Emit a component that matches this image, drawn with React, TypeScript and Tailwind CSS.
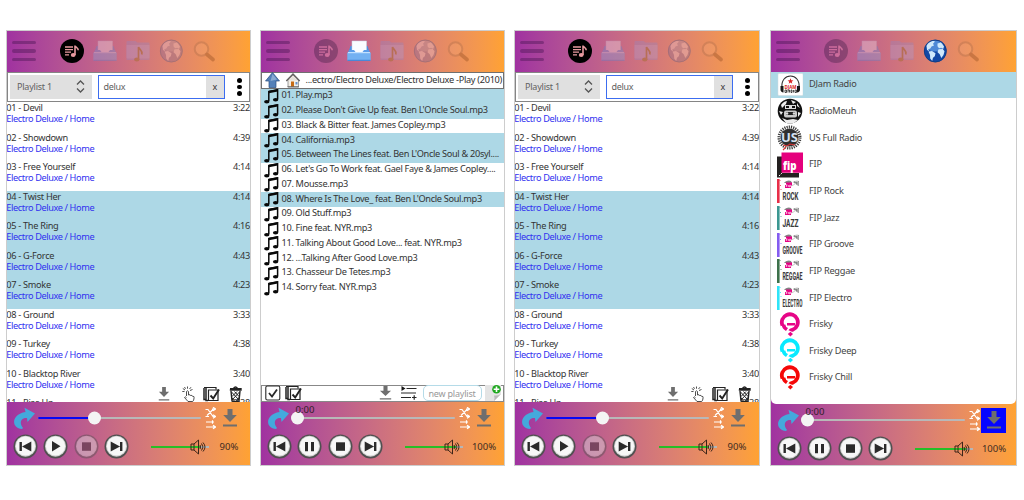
import React from "react";

const TRACKS: [string, string][] = [
  ["01 - Devil", "3:22"],
  ["02 - Showdown", "4:39"],
  ["03 - Free Yourself", "4:14"],
  ["04 - Twist Her", "4:14"],
  ["05 - The Ring", "4:16"],
  ["06 - G-Force", "4:43"],
  ["07 - Smoke", "4:23"],
  ["08 - Ground", "3:33"],
  ["09 - Turkey", "4:38"],
  ["10 - Blacktop River", "3:40"],
  ["11 - Rise Up", "3:38"],
];

const FILES: [string, boolean][] = [
  ["01. Play.mp3", true],
  ["02. Please Don't Give Up feat. Ben L'Oncle Soul.mp3", true],
  ["03. Black & Bitter feat. James Copley.mp3", false],
  ["04. California.mp3", true],
  ["05. Between The Lines feat. Ben L'Oncle Soul & 20syl....", true],
  ["06. Let's Go To Work feat. Gael Faye & James Copley....", false],
  ["07. Mousse.mp3", false],
  ["08. Where Is The Love_ feat. Ben L'Oncle Soul.mp3", true],
  ["09. Old Stuff.mp3", false],
  ["10. Fine feat. NYR.mp3", false],
  ["11. Talking About Good Love... feat. NYR.mp3", false],
  ["12. ...Talking After Good Love.mp3", false],
  ["13. Chasseur De Tetes.mp3", false],
  ["14. Sorry feat. NYR.mp3", false],
];

type Tab = "list" | "tray" | "folder" | "globe" | "search";

function TabIcon({ kind, on }: { kind: Tab; on: boolean }) {
  return (
    <svg className={on ? "h-6 w-6 shrink-0" : kind === "search" ? "h-6 w-6 shrink-0 opacity-30" : "h-6 w-6 shrink-0 opacity-30"} viewBox="0 0 24 24">
      {kind === "list" && (
        <>
          <circle cx="12" cy="12" r="12" fill={on ? "#000" : "#201030"} />
          <g stroke={on ? "#e79aa0" : "#ff9fb8"} strokeWidth="1.3" fill="none">
            <path d="M5 8h8M5 10.6h8M5 13.2h6M5 15.8h4" />
            <path d="M15 16V6.5c.3 2 3.4 1.900 3.200 4.800" strokeWidth="1.600" />
          </g>
          <ellipse cx="13.200" cy="16" rx="2.400" ry="1.900" fill={on ? "#e79aa0" : "#ff9fb8"} />
        </>
      )}
      {kind === "tray" && (
        <>
          <path d="M1 14 3.500 7h17l2.500 7z" fill="#4d8fe0" />
          <path d="M5 2h14.500v12H5z" fill="#fafcff" stroke="#c9d6e6" strokeWidth=".5" />
          <path d="M2 11h5l1.500 2h7l1.500-2h5l1 4H1z" fill="#5a9cea" />
          <rect x=".3" y="13" width="23.400" height="9" rx="1.200" fill="#73b1f2" />
          <path d="M1 13.600h22" stroke="#c1e0ff" strokeWidth="1.200" />
          <path d="M.5 21.300h23" stroke="#3f7fd0" strokeWidth="1" />
        </>
      )}
      {kind === "folder" && (
        <>
          <path d="M.5 21V3q0-1 1-1h8l2 1.500h11q1 0 1 1V21z" fill="#8b8bd0" />
          <path d="M.5 6h23v12.500q0 1-1 1h-21q-1 0-1-1z" fill="#a5a8e8" />
          <path d="M12.500 20.500V8c1 3 4.500 3.500 3.300 7.500" stroke="#806000" strokeWidth="1.700" fill="none" />
          <ellipse cx="10.800" cy="20.500" rx="2.700" ry="2" fill="#8a6a00" />
        </>
      )}
      {kind === "globe" && (
        <>
          <circle cx="12.300" cy="12" r="11.300" fill={on ? "#1248a5" : "#7064a0"} />
          <ellipse cx="12" cy="7" rx="8.500" ry="5.500" fill={on ? "#6eaaf0" : "#a7a0c4"} opacity=".65" />
          <g fill={on ? "#cfe8fb" : "#e6d0e8"}>
            <path d="M3.500 6.500 6 3.500l4-1.800 2 .8-2 2.200 1 1.800-2.500 1-1.200 2-2 .8 1 2-2.300-1.300z" />
            <path d="M5.500 12.500 9 12l3.500 2.300-.7 3-1.800 1.500-.8 3.200-2-2.600-.2-3.300z" />
            <path d="M14.500 4.500 18 3.600l3 4-.8 2.400-2-1.200-2.200.4-1.500-2z" />
            <path d="M15.500 10.200 19.800 10l1.700 2.200-1 3.800-2.200 3-1.600-3.800-2.200-2z" />
          </g>
          <circle cx="12.300" cy="12" r="11" fill="none" stroke="#103878" strokeWidth=".7" />
        </>
      )}
      {kind === "search" && (
        <>
          <circle cx="9.500" cy="10" r="6.800" fill="#ffc090" fillOpacity=".5" stroke="#a06848" strokeWidth="2" />
          <path d="m15 15.500 6 5" stroke="#7a3a10" strokeWidth="3.600" strokeLinecap="round" />
        </>
      )}
    </svg>
  );
}

function Header({ active }: { active: Tab }) {
  const tabs: Tab[] = ["list", "tray", "folder", "globe", "search"];
  return (
    <header className="flex h-[41px] shrink-0 items-center bg-linear-to-r from-[#a032a0] to-[#ffa232] pl-[5px]">
      <div className="flex w-6 flex-col gap-[5px] opacity-45">
        <i className="h-[3.6px] rounded-full bg-[#501858]" />
        <i className="h-[3.6px] rounded-full bg-[#501858]" />
        <i className="h-[3.6px] rounded-full bg-[#501858]" />
      </div>
      <div className="ml-6 flex gap-[9px]">
        {tabs.map((t) => (
          <TabIcon key={t} kind={t} on={t === active} />
        ))}
      </div>
    </header>
  );
}

function Download({ className, color = "#6e6e6e" }: { className: string; color?: string }) {
  return (
    <svg className={className} viewBox="0 0 16 18" fill={color} preserveAspectRatio="none">
      <path d="M5.500 0h5v6h4.300L8 13 1.200 6h4.300zM1 15.600h14v1.900H1z" />
    </svg>
  );
}

function CopyCheck() {
  return (
    <svg className="h-4 w-[17px]" viewBox="0 0 17 16" fill="none" stroke="#222" strokeWidth="1.200">
      <path d="M1 2v11.500h2M3 1v13.500h2" strokeWidth="1.500" />
      <path d="M5.500 4H15v10.500H5.500z" />
      <path d="M1 1.500h12v2" />
      <path d="m7.500 9.500 2.700 3L16 3.500" strokeWidth="1.900" />
    </svg>
  );
}

function Round({ kind, dim }: { kind: "prev" | "play" | "pause" | "stop" | "next"; dim?: boolean }) {
  return (
    <svg className={dim ? "h-[25px] w-[25px] opacity-45" : "h-[25px] w-[25px]"} viewBox="0 0 25 25">
      <circle cx="12.500" cy="12.500" r="12" fill="#505050" />
      <circle cx="12.500" cy="12.200" r="10.500" fill="#d0d0d0" />
      <circle cx="12.500" cy="12" r="9.600" fill={dim ? "#ddd" : "#f7f7f7"} />
      <g fill="#2a2a2a">
        {kind === "prev" && <path d="M6.500 8h2.400v9H6.500zM18.300 7.500v10L9 12.500z" />}
        {kind === "next" && <path d="M16 8h2.400v9H16zM6.700 7.500v10l9.300-5z" />}
        {kind === "play" && <path d="M9 7v10.500l8.500-5.200z" />}
        {kind === "pause" && <path d="M8 8h3v9.200H8zM14 8h3v9.200h-3z" />}
        {kind === "stop" && <path d="M8 8.300h9v8.500H8z" />}
      </g>
    </svg>
  );
}

function Player({ playing, blue, tall, volume }: { playing: boolean; blue?: boolean; tall?: boolean; volume: string }) {
  return (
    <footer className={tall ? "flex grow flex-col pt-[4px]" : "flex grow flex-col bg-linear-to-r from-[#a032a0] to-[#ffa232] pt-[3.500px]"}>
      <div className="flex h-[25px] shrink-0 items-center">
        <svg className="ml-1.5 h-[23px] w-[22px]" viewBox="0 0 22 23" fill="#44a9dc">
          <path d="M11.500.8 22 6.500l-7.500 8.500-.5-4C8.500 10.500 5.500 15.500 10 21l-1 1C-3 20.500-1 7 12.500 5z" />
        </svg>
        <div className="relative ml-[3px] flex h-[2.600px] w-[163px] rounded-full bg-[#b8b8b8]">
          {!playing && <div className="w-[56px] rounded-full bg-[#0808f4]" />}
          <i className={playing ? "absolute -left-[1px] top-1/2 h-[13px] w-[13px] -translate-y-1/2 rounded-full bg-[#f4f4f4]" : "absolute left-[49.500px] top-1/2 h-[13px] w-[13px] -translate-y-1/2 rounded-full bg-[#f4f4f4]"} />
          {playing && <span className="absolute left-[3.500px] top-[-12.500px] text-[9.500px] leading-[11px] text-[#302028]">0:00</span>}
        </div>
        <svg className="ml-[4px] h-[23px] w-[11px]" viewBox="0 0 11 23" fill="none" stroke="#fff" strokeWidth="1.200">
          <path d="M.5 2.500h2.500L8 9.500h2M2 8.500 8 2.500M.5 9.500H4M7 2h3M8 .3 10.500 2 8 3.700M8 7.800l2.500 1.700L8 11.200" />
          <path d="M1 15h8M1 20h8.500M7.500 13.200v3.600M8 18.200l2.500 1.800L8 21.800" />
        </svg>
        {blue ? (
          <div className="ml-[1px] flex h-[25px] w-[25px] items-center justify-center bg-[#0505ff]">
            <Download className="h-[18px] w-[16px]" />
          </div>
        ) : (
          <Download className="ml-[5.500px] h-[18px] w-[16px]" />
        )}
      </div>
      <div className="mt-[3px] flex h-[25px] shrink-0 items-center pl-[5.500px]">
        <div className="flex w-[117px] justify-between">
          <Round kind="prev" />
          <Round kind={playing ? "pause" : "play"} />
          <Round kind="stop" dim={!playing} />
          <Round kind="next" />
        </div>
        <div className="relative ml-[21.500px] mt-[2px] flex h-[2.200px] w-[58px]">
          <div className={playing ? "w-[51px] bg-[#27be27]" : "w-[49px] bg-[#27be27]"} />
          <div className="grow bg-[#b6b6b6]" />
          <svg className="absolute left-[39px] top-[-7px] h-4 w-4" viewBox="0 0 16 16" fill="none" stroke="#3c2518" strokeWidth="1">
            <path d="M1 5h3v6H1zM4 5l4.500-4v14L4 11M10 6q1.500 2 0 4M11.500 4.500q3 3.500 0 7M13 3.500q4 4.500 0 9" />
          </svg>
        </div>
        <span className={playing ? "ml-[6px] mt-[2px] w-[30px] text-center text-[9.500px] text-[#3e2b22]" : "ml-[7px] mt-[2px] w-[26px] text-center text-[9.500px] text-[#3e2b22]"}>{volume}</span>
      </div>
    </footer>
  );
}

function PlaylistPanel({ className }: { className: string }) {
  return (
    <section className={className}>
      <Header active="list" />
      <div className="flex h-[30.500px] shrink-0 items-center border border-[#858585] bg-white pl-[2px]">
        <div className="flex h-[24px] w-[82px] items-center justify-between bg-[#e0e0e0] pl-[7px] pr-[7px] text-[9px] text-[#626262]">
          <span className="tracking-[-0.22px]">Playlist 1</span>
          <svg className="h-[13px] w-[9px]" viewBox="0 0 9 13" fill="none" stroke="#555" strokeWidth="1.300">
            <path d="M1 4.500 4.500 1 8 4.500M1 8.500 4.500 12 8 8.500" />
          </svg>
        </div>
        <div className="ml-[6px] flex h-[23.500px] w-[127px] items-center border-[1.500px] border-[#3c6df0] bg-white pl-[4.500px] text-[9px] text-[#606060]">
          <span className="grow tracking-[-0.3px]">delux</span>
          <span className="flex h-full w-[18px] items-center justify-center bg-[#e0e0e0] text-[#333]">x</span>
        </div>
        <div className="ml-[12px] flex flex-col gap-[2px]">
          <i className="h-[4.500px] w-[4.500px] rounded-full bg-black" />
          <i className="h-[4.500px] w-[4.500px] rounded-full bg-black" />
          <i className="h-[4.500px] w-[4.500px] rounded-full bg-black" />
        </div>
      </div>
      <div className="relative h-[300px] min-h-0 w-full shrink-0 overflow-hidden bg-white">
        {TRACKS.map(([name, time], i) => (
          <div key={name} className={i > 2 && i < 7 ? "h-[29.500px] bg-[#add8e6]" : "h-[29.500px]"}>
            <div className="-ml-[0.700px] flex justify-between text-[9.200px] leading-[11px] tracking-[-0.3px] text-[#333]">
              <span>{name}</span>
              <span>{time}</span>
            </div>
            <div className="-ml-[0.700px] text-[9.200px] leading-[11.500px] tracking-[-0.390px] text-[#3030f0]">Electro Deluxe / Home</div>
          </div>
        ))}
        <div className="absolute bottom-0 right-[8px] flex h-[17px] items-center">
          <Download className="mr-[12px] h-[14px] w-[12px]" />
          <svg className="mr-[8px] h-4 w-[13px]" viewBox="0 0 13 16" fill="none" stroke="#3b3b3b" strokeWidth=".9">
            <path d="M4.500 10V5.500q1-1.500 2 0V9q2-.8 2 .5 1.800-.6 2 .8 2-.2 1.600 1.500-.2 2.800-1.400 3.700H6L2.500 11.500q.5-1.500 2 .2M5.500 2.700V.5M3 4 .8 2.500M3.500 2.800 2.500 1M7.500 3 9 1.200M8 4.500l2.500-1M2.500 5.500H.3" />
          </svg>
          <CopyCheck />
          <svg className="ml-[9px] h-4 w-[13px]" viewBox="0 0 13 16" fill="none" stroke="#222" strokeWidth="1">
            <path d="M.8 4h11.400M1 2.800h11v2M4.500 2.500q2-3 4 0M2 5l1 10q3.500 1 7 0l1-10" strokeWidth="1.400" />
            <path d="m2.500 6 7.500 8M5.500 5.500l4.500 5M10.500 6 3 14M8 5.500l-5 5M3 12l2 2.500M10.500 11l-3 4" />
          </svg>
        </div>
      </div>
      <Player playing={false} volume="90%" />
    </section>
  );
}

function MusicNote() {
  return (
    <svg className="ml-[3px] h-[15px] w-[15px] shrink-0" viewBox="0 0 15 15">
      <path d="M4.800 12V2.500L13.600.8v9.500" fill="none" stroke="#080808" strokeWidth="1.500" />
      <path d="M4.800 3 13.600 1.300" stroke="#080808" strokeWidth="2.300" />
      <ellipse cx="2.800" cy="12.800" rx="2.700" ry="1.700" fill="#080808" />
      <ellipse cx="11.600" cy="10.800" rx="2.700" ry="1.700" fill="#080808" />
    </svg>
  );
}

function FilesPanel({ className }: { className: string }) {
  return (
    <section className={className}>
      <Header active="tray" />
      <div className="flex h-[17.500px] shrink-0 items-center border border-[#707070] bg-white">
        <svg className="ml-[3px] h-[16px] w-[15px] shrink-0" viewBox="0 0 15 16">
          <path d="M7.500.5 14.500 9H11v6.500H4V9H.5z" fill="#5380b8" stroke="#284d80" strokeWidth=".7" />
          <path d="M7.500 2 12 7.500 5.500 9z" fill="#8aabd2" />
        </svg>
        <svg className="ml-[5px] h-[16px] w-[16px] shrink-0" viewBox="0 0 16 16">
          <path d="M3 7.500h10.500V15H3z" fill="#f2eee6" stroke="#777" strokeWidth=".7" />
          <path d="M8 1 .8 8.500l1 1L8 3.500l6.200 6 1-1z" fill="#646060" />
          <path d="M8 3.500 13 8.500H3z" fill="#e7e2da" />
          <path d="M6 9.500h3V15H6z" fill="#c66a12" />
          <path d="M10.500 10h2v2.500h-2z" fill="#6290cb" />
          <path d="M2.500 14.800h11.500" stroke="#6a6a6a" />
        </svg>
        <span className="ml-[4.500px] whitespace-nowrap text-[9.200px] tracking-[-0.300px] text-[#303030]">...ectro/Electro Deluxe/Electro Deluxe -Play (2010)</span>
      </div>
      <div className="h-[295.500px] shrink-0 bg-white">
        {FILES.map(([f, sel]) => (
          <div key={f} className={sel ? "flex h-[14.750px] items-center bg-[#add8e6]" : "flex h-[14.750px] items-center"}>
            <MusicNote />
            <span className="mt-[-2px] ml-[2.500px] whitespace-nowrap text-[9.200px] leading-[12px] tracking-[-0.310px] text-[#333]">{f}</span>
          </div>
        ))}
      </div>
      <div className="flex h-[17.500px] shrink-0 items-center border border-[#888] bg-white">
        <svg className="ml-[3px] h-[16px] w-[16px] shrink-0" viewBox="0 0 16 16" fill="none" stroke="#282828">
          <rect x=".8" y="1" width="14" height="14" rx="1.500" strokeWidth="1.100" />
          <path d="m4 8 3 3.500 5-7" strokeWidth="1.800" />
        </svg>
        <div className="ml-[4px] flex shrink-0 items-center"><CopyCheck /></div>
        <Download className="ml-[77px] h-[14px] w-[13px] shrink-0" />
        <svg className="ml-[9px] h-[14px] w-[16px] shrink-0" viewBox="0 0 16 14" stroke="#282828" strokeWidth="1.200">
          <path d="M.5 0v5L4.500 2.500z" fill="#181818" stroke="none" />
          <path d="M5.500 2.500h10M0 7h15M0 11.500h10M11 11.500h4.500M13.200 9.200v4.600" />
        </svg>
        <div className="ml-[5.500px] flex h-[16px] w-[59px] shrink-0 items-center justify-center whitespace-nowrap rounded-[5px] border border-[#b5dbe8] text-[9px] tracking-[-0.200px] text-[#999]">new playlist</div>
        <svg className="ml-[3px] h-[16px] w-[17px] shrink-0" viewBox="0 0 17 16">
          <path d="M0 0h16v9l-7 7H0z" fill="#e4e4e4" />
          <path d="M9 16q1-3.500 0-5.500 4 .5 7-1.500z" fill="#b9b9b9" />
          <circle cx="11.500" cy="4.300" r="4.300" fill="#20a820" />
          <path d="M11.500 1.500v5.600M8.700 4.300h5.600" stroke="#fff" strokeWidth="1.600" />
        </svg>
      </div>
      <Player playing volume="100%" />
    </section>
  );
}

function FipLogo({ color, label }: { color: string; label: string }) {
  return (
    <svg className="h-[26px] w-[26px] shrink-0" viewBox="0 0 26 26">
      <path fill="#fff" d="M0 0h26v26H0z" />
      <path d="M0 1h2.600v24H0z" fill={color} />
      <path d="M3 2v2M3.500 7v1M4 11v1" stroke={color} strokeWidth=".8" strokeDasharray="1 1" />
      <path d="M7 4.500q4-3 7-1.500l1 2H8zM16 4q3-2 6-1v5l-2-1z" fill="#5a5a5a" opacity=".75" />
      <path d="M14 8q3-1 5-3M18 3.500h3v4" stroke="#c5c5c5" strokeWidth="1" fill="none" />
      <path d="M9 4.500h6v3h-1v2.500H8V7h1z" fill="#e50083" />
      <path d="M9.300 9V6.700h1M9 7.800h1.300M11.400 7v2M12.600 9.300V7.200h1v1.200h-1" stroke="#fff" strokeWidth=".6" fill="none" />
      <text x="5.500" y="21.800" fontSize="11" fontWeight="700" fontFamily="Roboto, sans-serif" textLength={label.length > 4 ? 20 : 16} lengthAdjust="spacingAndGlyphs" fill="#3a3a3a">{label}</text>
    </svg>
  );
}

function FriskyLogo({ color }: { color: string }) {
  return (
    <svg className="h-[26px] w-[26px] shrink-0" viewBox="0 0 26 26" fill="none">
      <path d="M5.500 13.500A8 8 0 1 1 16 17.600Q13.500 18.200 13.200 19" stroke={color} strokeWidth="3.800" />
      <path d="M4.500 12.500q.8 4.500 4.500 6.500l2-3q-2.500-1-2.700-3.500z" fill={color} />
      <path d="M10 12.300h8" stroke={color} strokeWidth="2.600" />
      <path d="m13.400 19.700 2.600 2.300-2.600 2.400-2.600-2.400z" fill={color} />
    </svg>
  );
}

const STATIONS: [string, React.ReactNode][] = [
  ["DJam Radio", (
    <svg className="h-[26px] w-[26px] shrink-0" viewBox="0 0 26 26">
      <rect x="1" y="1.500" width="25" height="22" rx="1" fill="#fff" stroke="#d3dadd" strokeWidth=".5" />
      <path d="M5 16C3 0 24 0 22 16" fill="none" stroke="#303030" strokeWidth="1.100" />
      <path d="M3.500 14h3v6.500q-3-.5-3-3zM20 14h3v3.500q0 2.500-3 3z" fill="#171717" />
      <path d="m13.500 6.300.8 2 2.100.1-1.700 1.300.6 2.100-1.800-1.200-1.800 1.200.6-2.100-1.700-1.300 2.100-.1z" fill="#d72020" />
      <text x="7.500" y="17" fontSize="4.500" fontWeight="700" textLength="12" fill="#d72020">DJAM</text>
      <path d="M8 18v2.500h1.500V18zM11 20.500V18h1.500v2.500M14 18v2.500h1V18zM16.500 18v2.500M18 18h1.500v2.500H18z" fill="none" stroke="#222" strokeWidth=".8" />
    </svg>
  )],
  ["RadioMeuh", (
    <svg className="h-[26px] w-[26px] shrink-0" viewBox="0 0 26 26">
      <circle cx="13" cy="13" r="12.300" fill="#111" />
      <path d="M4 7q3-4 6-4l-1 3-4 4zM14 2l5 2-3 2zM20 5l3 5-3-2zM2 13l4 1-2 3zM21 14l3 1-3 4zM5 20l5 2 6-1 5 1-4 3H9z" fill="#eee" />
      <path d="M8 7h11v4H8z" fill="#ddd" />
      <path d="M9 8h3v2H9zM15 8h3v2h-3z" fill="#111" />
      <rect x="7" y="12.500" width="13" height="7" rx="2" fill="#c9c9c9" />
      <path d="M9 14h9v3H9z" fill="#222" />
      <circle cx="10" cy="15.500" r="1.300" fill="#ddd" />
      <circle cx="17" cy="15.500" r="1.300" fill="#ddd" />
    </svg>
  )],
  ["US Full Radio", (
    <svg className="h-[26px] w-[26px] shrink-0" viewBox="0 0 26 26">
      <circle cx="12.500" cy="12.500" r="9" fill="#303030" />
      <circle cx="12.500" cy="12.500" r="10.500" fill="none" stroke="#3d3d3d" strokeWidth="3" strokeDasharray="1.200 1" />
      <text x="4" y="16.500" fontSize="12" fontWeight="700" textLength="17" lengthAdjust="spacingAndGlyphs" fill="#d5e0f0">US</text>
      <path d="m6 20 4 1 3-2 5 1M9 22l-3 3" stroke="#d83232" strokeWidth="1.100" fill="none" />
    </svg>
  )],
  ["FIP", (
    <svg className="h-[26px] w-[26px] shrink-0" viewBox="0 0 26 26">
      <path d="M0 4.500h5V21h17v4.500H0z" fill="#242020" />
      <path d="M4.500.5H26v20.300H4.500z" fill="#e5007d" />
      <text x="6" y="17.500" fontSize="12" fontWeight="800" fontFamily="Open Sans, sans-serif" textLength="13.500" lengthAdjust="spacingAndGlyphs" fill="#fff">fip</text>
      <path d="m2 24 3-3" stroke="#fff" strokeWidth="1" strokeDasharray="1.500 1" />
    </svg>
  )],
  ["FIP Rock", <FipLogo color="#e82f49" label="ROCK" />],
  ["FIP Jazz", <FipLogo color="#3c9791" label="JAZZ" />],
  ["FIP Groove", <FipLogo color="#845cf0" label="GROOVE" />],
  ["FIP Reggae", <FipLogo color="#3d714b" label="REGGAE" />],
  ["FIP Electro", <FipLogo color="#2ee4f8" label="ELECTRO" />],
  ["Frisky", <FriskyLogo color="#e60687" />],
  ["Frisky Deep", <FriskyLogo color="#08eaff" />],
  ["Frisky Chill", <FriskyLogo color="#f50808" />],
];

function RadioPanel({ className }: { className: string }) {
  return (
    <section className={className}>
      <Header active="globe" />
      <div className="flex grow flex-col bg-linear-to-r from-[#a032a0] to-[#ffa232]">
        <div className="h-[332px] shrink-0 overflow-hidden rounded-b-[5px] bg-white">
          {STATIONS.map(([name, logo], i) => (
            <div key={name} className={i === 0 ? "flex h-[26.650px] items-center bg-[#add8e6] pl-[6px]" : "flex h-[26.650px] items-center pl-[6px]"}>
              {logo}
              <span className="-mt-[1px] ml-[6px] text-[9.200px] tracking-[-0.230px] text-[#444]">{name}</span>
            </div>
          ))}
        </div>
        <Player playing blue tall volume="100%" />
      </div>
    </section>
  );
}

export default function App() {
  return (
    <main className="flex h-[500px] w-[1024px] items-start overflow-hidden bg-white pl-[6px] pt-[29.500px] font-['Noto_Sans',sans-serif]">
      <PlaylistPanel className="flex h-[436.500px] w-[245px] shrink-0 flex-col border border-[#cdcdcd] bg-white" />
      <FilesPanel className="ml-[9px] flex h-[436.500px] w-[245px] shrink-0 flex-col border border-[#cdcdcd] bg-white" />
      <PlaylistPanel className="ml-[9px] flex h-[436.500px] w-[246px] shrink-0 flex-col border border-[#cdcdcd] bg-white" />
      <RadioPanel className="ml-[10px] flex h-[436.500px] w-[247px] shrink-0 flex-col border border-[#cdcdcd] bg-white" />
    </main>
  );
}
